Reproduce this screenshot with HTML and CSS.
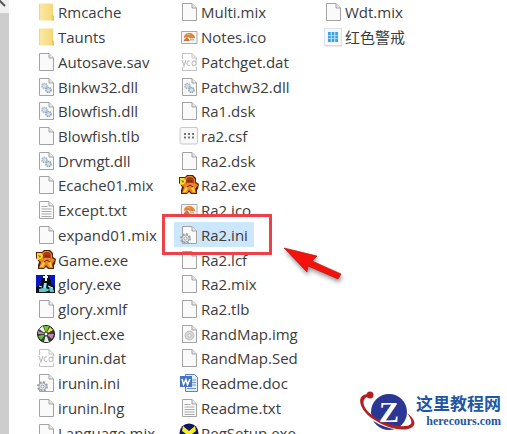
FILE: index.html
```html
<!DOCTYPE html>
<html lang="zh-CN">
<head>
<meta charset="utf-8">
<title>红色警戒</title>
<link rel="stylesheet" href="styles.css">
</head>
<body>
<svg class="defs" aria-hidden="true">
  <defs>
    <linearGradient id="gold" x1="0" x2="1"><stop offset="0" stop-color="#fbe9a4"/><stop offset="1" stop-color="#f4d675"/></linearGradient>
    <symbol id="folder" viewBox="0 0 20 20">
      <path d="M3 1.500h14v14.500l1 .5v2H3z" fill="url(#gold)"/><path d="M16 12.500l2 1.500v4.500h-2z" fill="#ecc75c"/><path d="M3.500 2v16" stroke="#f2d779"/>
    </symbol>
    <symbol id="file" viewBox="0 0 20 20">
      <path d="M3.500 1.500h9.500l4.500 4.500v12.500h-14z" fill="#fafafa" stroke="#a3a3a3"/><path d="M13 1.500v4.500h4.500" fill="#e8e8e8" stroke="#a3a3a3"/>
    </symbol>
    <symbol id="dll" viewBox="0 0 20 20">
      <use href="#file"/>
      <circle cx="8.500" cy="9" r="2.500" fill="#d5e1e8" stroke="#a3b8c4" stroke-width="1.600" stroke-dasharray="1.500 .6"/>
      <circle cx="12.500" cy="13" r="2.500" fill="#d5e1e8" stroke="#91a7b6" stroke-width="1.600" stroke-dasharray="1.500 .6"/>
    </symbol>
    <symbol id="txt" viewBox="0 0 20 20">
      <use href="#file"/><path d="M5.500 6.500h6M5.500 9h10M5.500 11.500h10M5.500 14h10M5.500 16.500h10" stroke="#aaa"/>
    </symbol>
    <symbol id="ini" viewBox="0 0 20 20">
      <use href="#file"/>
      <circle cx="6.500" cy="13.500" r="4.500" fill="none" stroke="#a0a5a9" stroke-width="2" stroke-dasharray="2 1.530"/>
      <circle cx="6.500" cy="13.500" r="3.600" fill="#e5e8ea" stroke="#a0a5a9"/><circle cx="6.500" cy="13.500" r="1.500" fill="#fff" stroke="#a0a5a9"/>
    </symbol>
    <symbol id="vcd" viewBox="0 0 20 20">
      <path d="M3.500 7V1.500h9.500l4.500 4.500V7M3.500 15v3.500h14V15M13 1.500v4.500h4.500" fill="none" stroke="#c2c2c2"/>
      <path d="M3 8l2 6 2-6M11 9c-4-1-4 5 0 4.500M17 7v6.500M17 11c-1-3-4-2-4 .5s3 3 4 .5" fill="none" stroke="#c2c2c2" stroke-width="1.200"/>
    </symbol>
    <symbol id="img" viewBox="0 0 20 20">
      <use href="#file"/><circle cx="10.500" cy="11.500" r="4.500" fill="#d6d6d6" stroke="#c0c0c0"/><circle cx="10.500" cy="11.500" r="1.500" fill="#f5f5f5" stroke="#aaa" stroke-width=".6"/>
    </symbol>
    <symbol id="ico" viewBox="0 0 20 20">
      <path d="M2.500 4.500h15.500v12h-15.500z" fill="#f8f8f8" stroke="#aaa"/><path d="M4 6h12.500v9H4z" fill="#f2f2ef"/>
      <path d="M5 11c0-3 2-5 5-5s6 2 6 5l-5 0-2-1z" fill="#e5813c"/><path d="M5 13l3-3 3 4H5z" fill="#d0713a"/><path d="M11 11.500h4v2h-4z" fill="#b2c795"/><path d="M8 7l3 1" stroke="#f4c15a"/>
    </symbol>
    <symbol id="csf" viewBox="0 0 20 20">
      <rect x="1" y="1.500" width="17.500" height="16.500" rx="1.500" fill="#f7f7f7" stroke="#c9c9c9"/>
      <path d="M5 8h10M5 11.500h10" stroke="#777" stroke-width="2" stroke-dasharray="2 2"/>
    </symbol>
    <symbol id="app" viewBox="0 0 20 20">
      <rect x="1.500" y="1.500" width="17" height="17" fill="#f5f8fa" stroke="#dce3e8"/>
      <path d="M5 6.500h10M5 10h10M5 13.500h10" stroke="#3ba3e8" stroke-width="2.800" stroke-dasharray="2.800 .8"/><path d="M2 19h17" stroke="#e9cfc4"/>
    </symbol>
    <symbol id="game" viewBox="0 0 20 20">
      <path d="M0 2h6l2-2h6l3 3v4l3 2-1 5-1 1v4h-6l-2-2-2 2H2v-4l1-3-3-4z" fill="#5a210d"/>
      <path d="M1 3h5l3-2h4l3 3v4l3 2-3 4 1 4-4 0-3-3-2 3H3l2-6-4-3z" fill="#ec8420"/>
      <circle cx="11" cy="6" r="4" fill="#a93a18"/><path d="M8 8h6v3H8z" fill="#e58b34"/>
      <path d="M1 3h4l2 3-2 3-4 1z" fill="#f4dc3c"/><path d="M2 5l3 1-1 2z" fill="#8c5918"/><path d="M4 17l3-5 2 1-2 4zM12 13l3-1 1 5-2 0z" fill="#f9d23a"/><path d="M9 6h4M8 12l3-2 3 2" stroke="#6d230f" fill="none"/>
    </symbol>
    <symbol id="glory" viewBox="0 0 20 20">
      <path d="M0 1h19v18H0z" fill="#0a18c4"/><path d="M0 19V13l5-3 1-6 3-3h3l3 5v4l4 3v6z" fill="#071018"/>
      <path d="M7 3h5M10 1v6" stroke="#eefcff" stroke-width="2"/><path d="M8 9h3l-1 5 4 2-5 2-6 0 0-3 4-1zM13 13l4 1 1 4-4 0z" fill="#5fc9cc"/><path d="M3 12l3 1M12 12l5 2M9 9v5" stroke="#e6ffff"/>
    </symbol>
    <symbol id="disc" viewBox="0 0 20 20">
      <circle cx="10" cy="10" r="8.500" fill="#35422e" stroke="#111"/>
      <path d="M10 10L3 5l4-3z" fill="#e8f6e5"/><path d="M10 10L8 2h5z" fill="#75c832"/><path d="M10 10l4-7 3 3z" fill="#e8e35a"/><path d="M10 10l8 0-2 5z" fill="#d37ebc"/><path d="M10 10l3 8-5 0z" fill="#e7f0e8"/><path d="M10 10l-5 6-3-4z" fill="#67bd45"/><path d="M10 10L2 10V7z" fill="#c886ba"/>
      <circle cx="10" cy="10" r="2" fill="#fff" stroke="#222"/>
    </symbol>
    <symbol id="word" viewBox="0 0 20 20">
      <path d="M6.500 1.500h9l3 3v14h-12z" fill="#e5efff" stroke="#5b82c4"/><path d="M13 7h4M13 9.500h4M13 12h4M8 15.500h9" stroke="#6c94d5"/>
      <path d="M1 3h12v11H1z" fill="#4674c4"/><path d="M3 6l1.500 5.500L7 6.500l1.500 5L11 6" fill="none" stroke="#fff" stroke-width="1.500"/>
    </symbol>
    <symbol id="reg" viewBox="0 0 20 20">
      <circle cx="10" cy="10" r="9.500" fill="#11135c"/><path d="M4 3l6 5 6-5 1 5-4 3 2 7H6l1-7-4-3z" fill="#f4ee27"/><circle cx="10" cy="4" r="2" fill="#17195c"/>
    </symbol>
  </defs>
</svg>

<div class="window">
  <div class="scrollbar" aria-hidden="true">
    <svg class="scroll-cap" viewBox="0 0 9 13"><path d="M-1 0l6 6" stroke="#555" stroke-width="2"/></svg>
  </div>
  <main class="files">
    <ul class="column">
      <li><svg><use href="#folder"/></svg><span>Rmcache</span></li>
      <li><svg><use href="#folder"/></svg><span>Taunts</span></li>
      <li><svg><use href="#file"/></svg><span>Autosave.sav</span></li>
      <li><svg><use href="#dll"/></svg><span>Binkw32.dll</span></li>
      <li><svg><use href="#dll"/></svg><span>Blowfish.dll</span></li>
      <li><svg><use href="#file"/></svg><span>Blowfish.tlb</span></li>
      <li><svg><use href="#dll"/></svg><span>Drvmgt.dll</span></li>
      <li><svg><use href="#file"/></svg><span>Ecache01.mix</span></li>
      <li><svg><use href="#txt"/></svg><span>Except.txt</span></li>
      <li><svg><use href="#file"/></svg><span>expand01.mix</span></li>
      <li><svg><use href="#game"/></svg><span>Game.exe</span></li>
      <li><svg><use href="#glory"/></svg><span>glory.exe</span></li>
      <li><svg><use href="#file"/></svg><span>glory.xmlf</span></li>
      <li><svg><use href="#disc"/></svg><span>Inject.exe</span></li>
      <li><svg><use href="#vcd"/></svg><span>irunin.dat</span></li>
      <li><svg><use href="#ini"/></svg><span>irunin.ini</span></li>
      <li><svg><use href="#file"/></svg><span>irunin.lng</span></li>
      <li><svg><use href="#file"/></svg><span>Language.mix</span></li>
    </ul>
    <ul class="column">
      <li><svg><use href="#file"/></svg><span>Multi.mix</span></li>
      <li><svg><use href="#ico"/></svg><span>Notes.ico</span></li>
      <li><svg><use href="#vcd"/></svg><span>Patchget.dat</span></li>
      <li><svg><use href="#dll"/></svg><span>Patchw32.dll</span></li>
      <li><svg><use href="#file"/></svg><span>Ra1.dsk</span></li>
      <li><svg><use href="#csf"/></svg><span>ra2.csf</span></li>
      <li><svg><use href="#file"/></svg><span>Ra2.dsk</span></li>
      <li><svg><use href="#game"/></svg><span>Ra2.exe</span></li>
      <li><svg><use href="#ico"/></svg><span>Ra2.ico</span></li>
      <li class="selected"><svg><use href="#ini"/></svg><span>Ra2.ini</span>
        <div class="callout"></div>
        <svg class="pointer" viewBox="0 0 66 40" aria-hidden="true"><path d="M2 2l33 8-5 5 29 13-3 5-30-13-1 6z" fill="#f3120e" stroke="#b91713" stroke-width=".7"/></svg>
      </li>
      <li><svg><use href="#file"/></svg><span>Ra2.lcf</span></li>
      <li><svg><use href="#file"/></svg><span>Ra2.mix</span></li>
      <li><svg><use href="#file"/></svg><span>Ra2.tlb</span></li>
      <li><svg><use href="#img"/></svg><span>RandMap.img</span></li>
      <li><svg><use href="#file"/></svg><span>RandMap.Sed</span></li>
      <li><svg><use href="#word"/></svg><span>Readme.doc</span></li>
      <li><svg><use href="#txt"/></svg><span>Readme.txt</span></li>
      <li><svg><use href="#reg"/></svg><span>RegSetup.exe</span></li>
    </ul>
    <ul class="column">
      <li><svg><use href="#file"/></svg><span>Wdt.mix</span></li>
      <li><svg><use href="#app"/></svg><span>红色警戒</span></li>
    </ul>
  </main>
</div>

<div class="watermark">
  <svg class="emblem" viewBox="0 0 60 46">
    <circle cx="33" cy="24" r="18" fill="#2b3795"/>
    <path d="M13 7C3 6 1 14 8 23C18 35 40 43 52 40" fill="none" stroke="#fff" stroke-width="3"/>
    <path d="M14 6C-1 5 2 21 17 31C29 39 42 43 52 41C63 38 58 30 51 25C56 32 58 37 50 38C40 39 26 35 17 28C6 20 4 10 14 8z" fill="#b3201f"/>
    <circle cx="14" cy="7" r="3.500" fill="#b3201f"/>
    <text x="33" y="34" text-anchor="middle" class="initial">Z</text>
  </svg>
  <div class="brand"><strong>这里教程网</strong><span>herecours.com</span></div>
</div>
</body>
</html>
```
FILE: styles.css
```css
* { box-sizing: border-box; }

body {
  margin: 0;
  height: 100vh;
  overflow: hidden;
  background: #fff;
  color: #3c3c3c;
  font: 15px/20px "Open Sans", "Noto Sans CJK SC", sans-serif;
}

.defs { position: absolute; width: 0; height: 0; }

/* The last row runs past the lower edge of the window. */
.window { display: flex; height: calc(100vh + 11px); }

.scrollbar { width: 9px; background: #cdcdcd; }
.scroll-cap { display: block; width: 9px; height: 13px; background: #f0f0f0; }

.files {
  flex: 1;
  display: grid;
  grid-template-columns: 143px 144px 1fr;
  padding-left: 27px;
}

.column {
  display: grid;
  grid-template-rows: repeat(18, 1fr);
  margin: 0;
  padding: 0;
  list-style: none;
}

.column li {
  position: relative;
  display: flex;
  align-items: center;
  gap: 2px;
  justify-self: start;
  white-space: nowrap;
}

.column li > svg { flex: none; width: 20px; height: 20px; }

.selected {
  margin-left: -5px;
  padding: 0 6px 0 5px;
  background: #cce6fc;
}

.callout {
  position: absolute;
  z-index: 1;
  inset: -8px -18px -8px -12px;
  border: 3px solid #ee4049;
}

.column .selected > .pointer {
  position: absolute;
  z-index: 1;
  left: 108px;
  top: 24px;
  width: 66px;
  height: 40px;
  filter: drop-shadow(1px 3px 2px #0006);
}

.watermark {
  position: absolute;
  right: 6px;
  bottom: 0;
  display: flex;
  align-items: center;
}

.emblem { width: 60px; height: 46px; }

.initial { font: bold 30px "Liberation Serif", serif; fill: #fff; }

.brand {
  display: flex;
  flex-direction: column;
  align-items: flex-end;
  color: #1e57a5;
}

.brand strong { font: bold 17px/21px "Noto Sans CJK SC", sans-serif; }
.brand span { font: bold 12px/17px "Liberation Serif", serif; }
```
